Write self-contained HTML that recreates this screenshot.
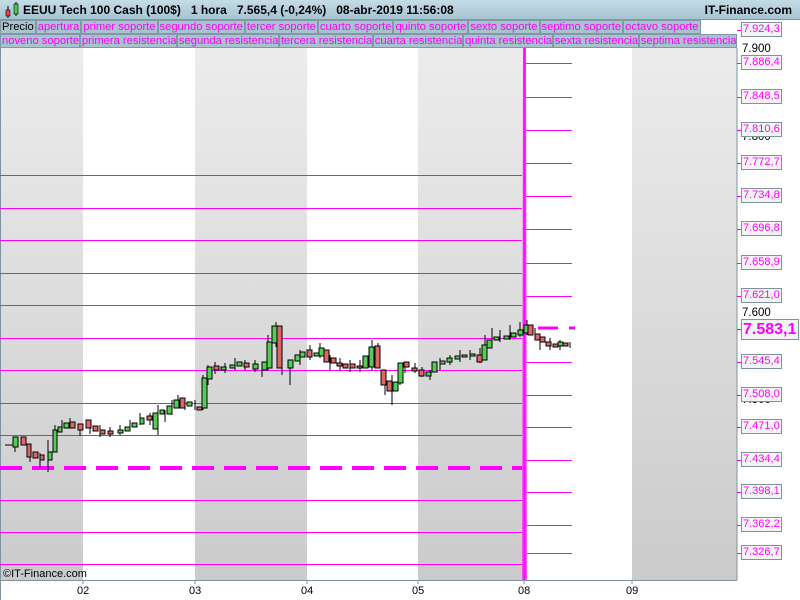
<!DOCTYPE html>
<html><head><meta charset="utf-8"><style>
*{margin:0;padding:0;box-sizing:border-box}
body{width:800px;height:600px;overflow:hidden;background:#fff;font-family:"Liberation Sans",sans-serif;position:relative}
.hdr{position:absolute;left:0;top:0;width:800px;height:20px;background:linear-gradient(#c4dce6,#a6c4d2);border-bottom:1px solid #7a9aa8;font-size:12px;font-weight:bold;line-height:20px}
.row{position:absolute;left:0;height:14px;display:flex;font-size:11.2px;line-height:13px}
.row span{background:#a8c2ce;border:1px solid #7f9aa6;color:#ff00ff;padding:0 1px;white-space:nowrap;overflow:hidden}
.ax{position:absolute;left:741px;width:41px;height:15px;border:1px solid #7f939c;background:#f4f4f4;color:#ff00ff;font-size:11px;line-height:13px;padding-left:1px;white-space:nowrap}
.tk{position:absolute;left:737px;width:4px;height:1px;background:#ff00ff}
.bl{position:absolute;left:742px;font-size:11.5px;color:#000}
.xl{position:absolute;top:585px;font-size:11px}
</style></head><body>
<svg width="800" height="600" style="position:absolute;left:0;top:0">
<defs><linearGradient id="g" x1="0" y1="0" x2="0" y2="1"><stop offset="0" stop-color="#ececec"/><stop offset="1" stop-color="#cbcbcb"/></linearGradient>
<linearGradient id="v" x1="0" y1="0" x2="1" y2="0"><stop offset="0" stop-color="#ff55ff"/><stop offset="0.5" stop-color="#ff00ff"/><stop offset="1" stop-color="#ff66ff"/></linearGradient></defs>
<rect x="0" y="48" width="737" height="532" fill="#fff"/>
<rect x="0" y="48" width="83" height="532" fill="url(#g)"/>
<rect x="195" y="48" width="112" height="532" fill="url(#g)"/>
<rect x="418" y="48" width="106" height="532" fill="url(#g)"/>
<rect x="632" y="48" width="105" height="532" fill="url(#g)"/>
<line x1="737" y1="48" x2="737" y2="580" stroke="#7f939c"/>
<line x1="0" y1="580.5" x2="737" y2="580.5" stroke="#7f939c"/>
<line x1="0.5" y1="48" x2="0.5" y2="600" stroke="#7f939c"/>
<g stroke="#7f939c"><line x1="83" y1="580" x2="83" y2="584"/><line x1="195" y1="580" x2="195" y2="584"/><line x1="307" y1="580" x2="307" y2="584"/><line x1="418" y1="580" x2="418" y2="584"/><line x1="524" y1="580" x2="524" y2="584"/><line x1="632" y1="580" x2="632" y2="584"/></g>
<g stroke="#ff00ff" stroke-width="1">
<line x1="0" y1="175.5" x2="522" y2="175.5"/><line x1="0" y1="208.5" x2="522" y2="208.5"/><line x1="0" y1="240.5" x2="522" y2="240.5"/><line x1="0" y1="273.5" x2="522" y2="273.5"/><line x1="0" y1="305.5" x2="522" y2="305.5"/><line x1="0" y1="338.5" x2="522" y2="338.5"/><line x1="0" y1="370.5" x2="522" y2="370.5"/><line x1="0" y1="403.5" x2="522" y2="403.5"/><line x1="0" y1="435.5" x2="522" y2="435.5"/><line x1="0" y1="500.5" x2="522" y2="500.5"/><line x1="0" y1="532.5" x2="522" y2="532.5"/><line x1="0" y1="564.5" x2="522" y2="564.5"/>
<line x1="526" y1="63.5" x2="572" y2="63.5"/><line x1="526" y1="97.5" x2="572" y2="97.5"/><line x1="526" y1="130.5" x2="572" y2="130.5"/><line x1="526" y1="163.5" x2="572" y2="163.5"/><line x1="526" y1="196.5" x2="572" y2="196.5"/><line x1="526" y1="229.5" x2="572" y2="229.5"/><line x1="526" y1="263.5" x2="572" y2="263.5"/><line x1="526" y1="296.5" x2="572" y2="296.5"/><line x1="526" y1="362.5" x2="572" y2="362.5"/><line x1="526" y1="395.5" x2="572" y2="395.5"/><line x1="526" y1="427.5" x2="572" y2="427.5"/><line x1="526" y1="460.5" x2="572" y2="460.5"/><line x1="526" y1="492.5" x2="572" y2="492.5"/><line x1="526" y1="525.5" x2="572" y2="525.5"/><line x1="526" y1="553.5" x2="572" y2="553.5"/>
</g>
<line x1="0" y1="468" x2="522" y2="468" stroke="#ff00ff" stroke-width="4" stroke-dasharray="22 10"/>
<line x1="538" y1="328" x2="575" y2="328" stroke="#ff00ff" stroke-width="3" stroke-dasharray="20 11"/>
<polygon points="522,580 523,48 526,48 527,580" fill="url(#v)"/>
<g stroke="#000" stroke-width="1">
<path d="M5 445h8M15 440v12M30 447v15M40 453v15M48 440v32M55 425v15M62 420v12M70 418v10M80 424v12M90 420v14M100 425v12M110 427v10M120 425v10M130 420v10M140 413v12M150 413v12M158 405v30M165 410v12M172 400v15M178 395v12M185 398v12M195 400v10M203 375v35M208 365v20M215 362v12M225 363v10M235 358v12M245 360v10M255 360v12M262 362v15M268 335v35M276 322v25M282 335v40M290 360v25M300 350v15M310 345v15M320 343v15M330 355v15M340 358v12M350 360v12M360 360v12M372 340v30M378 343v12M385 370v25M392 375v30M400 370v15M405 363v10M415 363v10M422 367v10M430 370v10M440 358v12M450 355v10M460 350v12M470 350v10M480 348v15M485 335v25M492 328v20M500 330v12M510 325v15M520 322v15M527 320v15M535 328v12M540 338v12M550 338v12M560 340v10M570 342v6"/>
</g>
<g stroke="#000" stroke-width="1">
<rect x="13" y="437" width="5" height="10" fill="#5c5"/><rect x="21" y="437" width="5" height="8" fill="#d66"/><rect x="27" y="444" width="4" height="13" fill="#d66"/><rect x="33" y="452" width="5" height="6" fill="#d66"/><rect x="40" y="455" width="4" height="5" fill="#d66"/><rect x="48" y="452" width="4" height="8" fill="#5c5"/><rect x="53" y="430" width="4" height="22" fill="#5c5"/><rect x="58" y="427" width="4" height="5" fill="#5c5"/><rect x="64" y="423" width="5" height="5" fill="#5c5"/><rect x="70" y="422" width="5" height="6" fill="#d66"/><rect x="78" y="424" width="5" height="6" fill="#d66"/><rect x="86" y="420" width="5" height="8" fill="#d66"/><rect x="93" y="426" width="5" height="5" fill="#d66"/><rect x="100" y="430" width="5" height="4" fill="#d66"/><rect x="108" y="431" width="5" height="3" fill="#d66"/><rect x="118" y="430" width="5" height="3" fill="#5c5"/><rect x="125" y="427" width="5" height="4" fill="#5c5"/><rect x="132" y="423" width="5" height="4" fill="#5c5"/><rect x="140" y="418" width="4" height="6" fill="#5c5"/><rect x="147" y="416" width="5" height="4" fill="#d66"/><rect x="153" y="413" width="5" height="16" fill="#5c5"/><rect x="160" y="410" width="4" height="4" fill="#5c5"/><rect x="167" y="406" width="5" height="8" fill="#5c5"/><rect x="174" y="400" width="5" height="8" fill="#5c5"/><rect x="180" y="398" width="5" height="10" fill="#d66"/><rect x="187" y="402" width="5" height="4" fill="#5c5"/><rect x="197" y="407" width="5" height="3" fill="#d66"/><rect x="202" y="378" width="5" height="30" fill="#5c5"/><rect x="207" y="367" width="5" height="12" fill="#5c5"/><rect x="214" y="366" width="5" height="4" fill="#d66"/><rect x="221" y="367" width="5" height="3" fill="#5c5"/><rect x="230" y="365" width="5" height="3" fill="#5c5"/><rect x="237" y="362" width="5" height="4" fill="#5c5"/><rect x="244" y="363" width="5" height="4" fill="#d66"/><rect x="253" y="364" width="5" height="5" fill="#5c5"/><rect x="262" y="362" width="5" height="8" fill="#5c5"/><rect x="267" y="342" width="5" height="26" fill="#5c5"/><rect x="272" y="326" width="5" height="17" fill="#5c5"/><rect x="277" y="326" width="5" height="42" fill="#d66"/><rect x="288" y="360" width="5" height="8" fill="#5c5"/><rect x="295" y="355" width="5" height="6" fill="#5c5"/><rect x="300" y="352" width="5" height="5" fill="#5c5"/><rect x="307" y="350" width="5" height="7" fill="#d66"/><rect x="314" y="353" width="5" height="3" fill="#5c5"/><rect x="319" y="348" width="5" height="8" fill="#5c5"/><rect x="324" y="350" width="5" height="12" fill="#d66"/><rect x="331" y="358" width="5" height="5" fill="#d66"/><rect x="337" y="363" width="5" height="3" fill="#d66"/><rect x="343" y="364" width="5" height="4" fill="#d66"/><rect x="350" y="364" width="5" height="4" fill="#d66"/><rect x="357" y="366" width="5" height="2" fill="#d66"/><rect x="363" y="356" width="5" height="12" fill="#5c5"/><rect x="369" y="347" width="5" height="20" fill="#5c5"/><rect x="375" y="346" width="5" height="22" fill="#d66"/><rect x="381" y="370" width="5" height="15" fill="#d66"/><rect x="387" y="381" width="5" height="10" fill="#d66"/><rect x="393" y="382" width="5" height="9" fill="#5c5"/><rect x="398" y="363" width="5" height="20" fill="#5c5"/><rect x="404" y="362" width="5" height="5" fill="#d66"/><rect x="412" y="368" width="5" height="3" fill="#d66"/><rect x="419" y="370" width="5" height="6" fill="#d66"/><rect x="426" y="372" width="5" height="4" fill="#5c5"/><rect x="432" y="362" width="5" height="10" fill="#5c5"/><rect x="440" y="361" width="5" height="3" fill="#5c5"/><rect x="447" y="358" width="5" height="4" fill="#5c5"/><rect x="455" y="356" width="5" height="3" fill="#5c5"/><rect x="462" y="355" width="5" height="2" fill="#5c5"/><rect x="470" y="354" width="5" height="2" fill="#5c5"/><rect x="477" y="355" width="5" height="7" fill="#d66"/><rect x="482" y="345" width="5" height="15" fill="#5c5"/><rect x="487" y="340" width="5" height="8" fill="#5c5"/><rect x="494" y="337" width="5" height="3" fill="#5c5"/><rect x="504" y="336" width="5" height="3" fill="#5c5"/><rect x="511" y="333" width="5" height="4" fill="#5c5"/><rect x="518" y="330" width="5" height="5" fill="#5c5"/><rect x="524" y="325" width="4" height="8" fill="#5c5"/><rect x="528" y="325" width="5" height="10" fill="#d66"/><rect x="535" y="334" width="5" height="6" fill="#d66"/><rect x="540" y="337" width="5" height="5" fill="#d66"/><rect x="546" y="342" width="5" height="4" fill="#d66"/><rect x="553" y="344" width="5" height="3" fill="#d66"/><rect x="558" y="342" width="5" height="4" fill="#5c5"/><rect x="563" y="343" width="5" height="3" fill="#d66"/>
</g>
</svg>
<div class="hdr"><svg width="18" height="20" style="position:absolute;left:3px;top:0"><line x1="5" y1="6" x2="5" y2="18" stroke="#000"/><rect x="3" y="10" width="4" height="6" fill="#e44" stroke="#000" stroke-width=".6"/><line x1="13" y1="2" x2="13" y2="16" stroke="#000"/><rect x="11" y="4" width="4" height="10" fill="#4c4" stroke="#000" stroke-width=".6"/></svg><span style="position:absolute;left:23px">EEUU Tech 100 Cash (100$)&nbsp;&nbsp;&nbsp;1 hora&nbsp;&nbsp;&nbsp;7.565,4 (-0,24%)&nbsp;&nbsp;&nbsp;08-abr-2019 11:56:08</span><span style="position:absolute;right:8px">IT-Finance.com</span></div>
<div class="row" style="top:20px"><span style="color:#000">Precio</span><span>apertura</span><span>primer soporte</span><span>segundo soporte</span><span>tercer soporte</span><span>cuarto soporte</span><span>quinto soporte</span><span>sexto soporte</span><span>septimo soporte</span><span>octavo soporte</span></div>
<div class="row" style="top:34px;width:737px;overflow:hidden"><span>noveno soporte</span><span>primera resistencia</span><span>segunda resistencia</span><span>tercera resistencia</span><span>cuarta resistencia</span><span>quinta resistencia</span><span>sexta resistencia</span><span>septima resistencia</span></div>
<div class="bl" style="top:43px">7.900</div><div class="bl" style="top:131px">7.800</div><div class="bl" style="top:307px">7.600</div><div class="bl" style="top:394px">7.500</div>
<div class="ax" style="top:22px">7.924,3</div><div class="tk" style="top:30px"></div>
<div class="ax" style="top:55px">7.886,4</div><div class="tk" style="top:63px"></div>
<div class="ax" style="top:89px">7.848,5</div><div class="tk" style="top:97px"></div>
<div class="ax" style="top:122px">7.810,6</div><div class="tk" style="top:130px"></div>
<div class="ax" style="top:155px">7.772,7</div><div class="tk" style="top:163px"></div>
<div class="ax" style="top:188px">7.734,8</div><div class="tk" style="top:196px"></div>
<div class="ax" style="top:221px">7.696,8</div><div class="tk" style="top:229px"></div>
<div class="ax" style="top:255px">7.658,9</div><div class="tk" style="top:263px"></div>
<div class="ax" style="top:288px">7.621,0</div><div class="tk" style="top:296px"></div>
<div class="ax" style="top:319px;width:58px;height:21px;font-size:16px;font-weight:bold;line-height:19px">7.583,1</div><div class="tk" style="top:329px"></div>
<div class="ax" style="top:354px">7.545,4</div><div class="tk" style="top:362px"></div>
<div class="ax" style="top:387px">7.508,0</div><div class="tk" style="top:395px"></div>
<div class="ax" style="top:419px">7.471,0</div><div class="tk" style="top:427px"></div>
<div class="ax" style="top:452px">7.434,4</div><div class="tk" style="top:460px"></div>
<div class="ax" style="top:484px">7.398,1</div><div class="tk" style="top:492px"></div>
<div class="ax" style="top:517px">7.362,2</div><div class="tk" style="top:525px"></div>
<div class="ax" style="top:545px">7.326,7</div><div class="tk" style="top:553px"></div>
<div style="position:absolute;left:3px;top:568px;font-size:11px">©IT-Finance.com</div>
<div class="xl" style="left:77px">02</div><div class="xl" style="left:189px">03</div><div class="xl" style="left:301px">04</div><div class="xl" style="left:412px">05</div><div class="xl" style="left:518px">08</div><div class="xl" style="left:626px">09</div>
</body></html>
